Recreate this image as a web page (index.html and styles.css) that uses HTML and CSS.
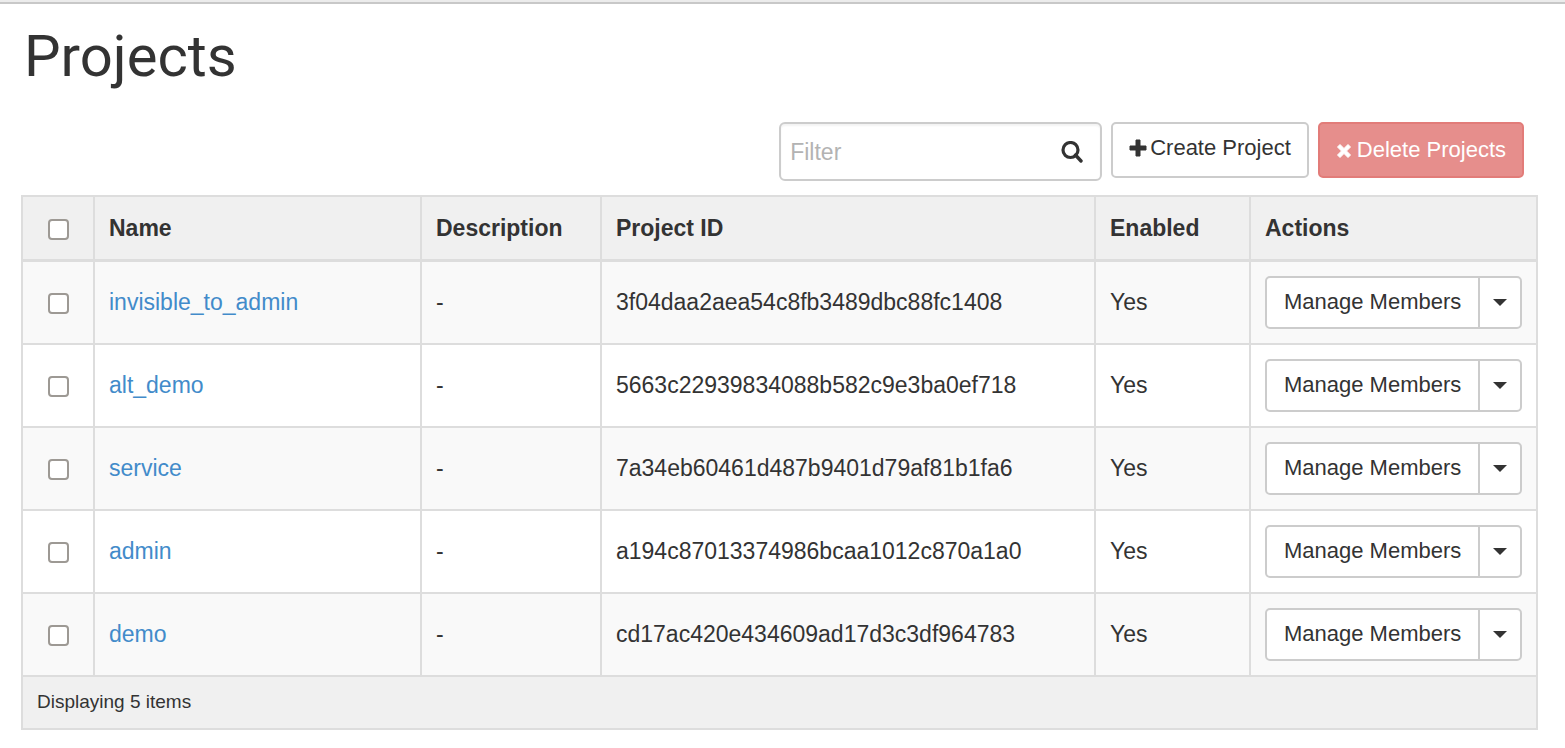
FILE: index.html
```html
<!DOCTYPE html>
<html lang="en">
<head>
    <meta charset="UTF-8">
    <meta name="viewport" content="width=device-width, initial-scale=1.0">
    <title>Projects</title>
    <link rel="stylesheet" href="styles.css">
</head>
<body>
    <main class="page">
        <h1>Projects</h1>

        <div class="table-actions">
            <div class="filter">
                <input type="text" id="filter" placeholder="Filter" aria-label="Filter">
                <button type="button" class="search-btn" aria-label="Search">
                    <svg width="22" height="22" viewBox="0 0 22 22" fill="none" stroke="#333">
                        <circle cx="9.500" cy="9" r="7.500" stroke-width="3.200"/>
                        <path d="M14.500 14l5.500 6" stroke-width="3.400" stroke-linecap="round"/>
                    </svg>
                </button>
            </div>
            <button type="button" class="btn create">
                <svg width="18" height="18" viewBox="0 0 18 18"><path d="M7 1h4v6h6v4h-6v6H7v-6H1V7h6z" fill="#333" stroke="#333" stroke-linejoin="round"/></svg>
                Create Project
            </button>
            <button type="button" class="btn btn-danger">
                <svg width="16" height="18" viewBox="0 0 16 18"><path d="M4 3.500L8 7.500l4-4L14.500 6l-4 4 4 4-2.500 2.500-4-4-4 4L1.500 14l4-4-4-4z" fill="#fff" stroke="#fff" stroke-linejoin="round"/></svg>
                Delete Projects
            </button>
        </div>

        <table class="projects">
            <colgroup>
                <col class="col-check">
                <col class="col-name">
                <col class="col-description">
                <col>
                <col class="col-enabled">
                <col class="col-actions">
            </colgroup>
            <thead>
                <tr>
                    <th class="check"><input type="checkbox" aria-label="Select all"></th>
                    <th>Name</th>
                    <th>Description</th>
                    <th>Project ID</th>
                    <th>Enabled</th>
                    <th>Actions</th>
                </tr>
            </thead>
            <tbody>
                <tr>
                    <td class="check"><input type="checkbox" aria-label="Select invisible_to_admin"></td>
                    <td><a href="#">invisible_to_admin</a></td>
                    <td>-</td>
                    <td>3f04daa2aea54c8fb3489dbc88fc1408</td>
                    <td>Yes</td>
                    <td>
                        <div class="btn-group">
                            <button type="button" class="btn">Manage Members</button>
                            <button type="button" class="btn toggle" aria-label="More actions"><span class="caret"></span></button>
                        </div>
                    </td>
                </tr>
                <tr>
                    <td class="check"><input type="checkbox" aria-label="Select alt_demo"></td>
                    <td><a href="#">alt_demo</a></td>
                    <td>-</td>
                    <td>5663c22939834088b582c9e3ba0ef718</td>
                    <td>Yes</td>
                    <td>
                        <div class="btn-group">
                            <button type="button" class="btn">Manage Members</button>
                            <button type="button" class="btn toggle" aria-label="More actions"><span class="caret"></span></button>
                        </div>
                    </td>
                </tr>
                <tr>
                    <td class="check"><input type="checkbox" aria-label="Select service"></td>
                    <td><a href="#">service</a></td>
                    <td>-</td>
                    <td>7a34eb60461d487b9401d79af81b1fa6</td>
                    <td>Yes</td>
                    <td>
                        <div class="btn-group">
                            <button type="button" class="btn">Manage Members</button>
                            <button type="button" class="btn toggle" aria-label="More actions"><span class="caret"></span></button>
                        </div>
                    </td>
                </tr>
                <tr>
                    <td class="check"><input type="checkbox" aria-label="Select admin"></td>
                    <td><a href="#">admin</a></td>
                    <td>-</td>
                    <td>a194c87013374986bcaa1012c870a1a0</td>
                    <td>Yes</td>
                    <td>
                        <div class="btn-group">
                            <button type="button" class="btn">Manage Members</button>
                            <button type="button" class="btn toggle" aria-label="More actions"><span class="caret"></span></button>
                        </div>
                    </td>
                </tr>
                <tr>
                    <td class="check"><input type="checkbox" aria-label="Select demo"></td>
                    <td><a href="#">demo</a></td>
                    <td>-</td>
                    <td>cd17ac420e434609ad17d3c3df964783</td>
                    <td>Yes</td>
                    <td>
                        <div class="btn-group">
                            <button type="button" class="btn">Manage Members</button>
                            <button type="button" class="btn toggle" aria-label="More actions"><span class="caret"></span></button>
                        </div>
                    </td>
                </tr>
            </tbody>
            <tfoot>
                <tr>
                    <td colspan="6">Displaying 5 items</td>
                </tr>
            </tfoot>
        </table>
    </main>
</body>
</html>
```

FILE: styles.css
```css
* {
    box-sizing: border-box;
}
body {
    margin: 0;
    border-top: 2px solid #ececec;
    background: #fff;
    color: #333;
    font-family: "Liberation Sans", Arial, sans-serif;
    font-size: 23px;
    line-height: 30px;
}
.page {
    border-top: 2px solid #c8c8c8;
    padding: 20px 27px 18px 21px;
}
h1 {
    margin: 0 0 34px;
    padding-left: 3px;
    font-family: Roboto, sans-serif;
    font-size: 58px;
    font-weight: 400;
    line-height: 64px;
}
a {
    color: #428bca;
    text-decoration: none;
}
button, input {
    font-family: inherit;
    color: inherit;
}
.table-actions {
    display: flex;
    justify-content: flex-end;
    align-items: flex-start;
    gap: 9px;
    padding-right: 14px;
    margin-bottom: 14px;
}
.filter {
    display: flex;
    align-items: center;
    width: 323px;
    height: 59px;
    padding: 0 17px 0 9px;
    border: 2px solid #ccc;
    border-radius: 6px;
    box-shadow: inset 0 2px 2px rgba(0, 0, 0, 0.05);
}
.filter input {
    flex: 1;
    min-width: 0;
    padding: 2px 0 0;
    border: none;
    outline: none;
    background: none;
    font-size: 23px;
}
.filter input::placeholder {
    color: #b3b3b3;
}
.search-btn {
    display: flex;
    padding: 0;
    border: none;
    background: none;
}
.btn {
    display: flex;
    align-items: center;
    justify-content: center;
    gap: 3px;
    height: 53px;
    padding: 0 17px;
    border: 2px solid #ccc;
    border-radius: 5px;
    background: #fff;
    font-size: 22px;
    white-space: nowrap;
    cursor: pointer;
}
.table-actions .btn {
    height: 56px;
    padding: 0 16px;
}
.table-actions .create {
    padding-bottom: 4px;
}
.table-actions .btn-danger {
    gap: 5px;
    border-color: #e27c79;
    background: #e68e8c;
    color: #fff;
}
.projects {
    width: 100%;
    table-layout: fixed;
    border-collapse: collapse;
}
.col-check {
    width: 72px;
}
.col-name {
    width: 327px;
}
.col-description {
    width: 180px;
}
.col-enabled {
    width: 155px;
}
.col-actions {
    width: 287px;
}
th, td {
    padding: 14px;
    border: 2px solid #ddd;
    text-align: left;
}
th {
    height: 64px;
    border-bottom-width: 3px;
    background: #f0f0f0;
}
tbody tr:nth-child(odd) {
    background: #f9f9f9;
}
.check {
    padding: 14px 0;
    line-height: 24px;
    text-align: center;
}
.check input {
    appearance: none;
    width: 21px;
    height: 21px;
    margin: 0;
    border: 2px solid #9d9994;
    border-radius: 4px;
    background: #fff;
    vertical-align: middle;
}
.btn-group {
    display: flex;
}
.btn-group .btn:first-child {
    border-radius: 5px 0 0 5px;
}
.btn-group .toggle {
    width: 46px;
    margin-left: -2px;
    padding: 0;
    border-radius: 0 5px 5px 0;
}
.caret {
    border-top: 7px solid #333;
    border-left: 7px solid transparent;
    border-right: 7px solid transparent;
}
tfoot td {
    padding: 10px 14px 11px;
    background: #f0f0f0;
    font-size: 19px;
}
```
